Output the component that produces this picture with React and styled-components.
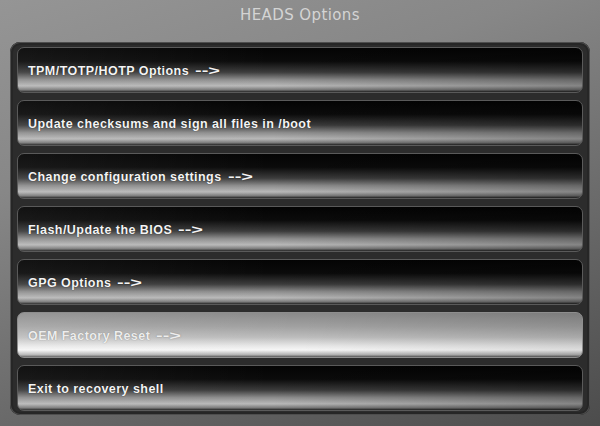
import React from "react";
import styled, { createGlobalStyle } from "styled-components";

const items = [
  { label: "TPM/TOTP/HOTP Options", more: true },
  { label: "Update checksums and sign all files in /boot" },
  { label: "Change configuration settings", more: true },
  { label: "Flash/Update the BIOS", more: true },
  { label: "GPG Options", more: true },
  { label: "OEM Factory Reset", more: true },
  { label: "Exit to recovery shell" },
];

const SELECTED = 5;

const App = () => {
  return (
    <Screen>
      <GlobalStyle />
      <Title>HEADS Options</Title>
      <Panel>
        {items.map((item, i) => (
          <Row key={item.label} selected={i === SELECTED}>
            <Label selected={i === SELECTED}>
              {item.label}
              {item.more && <Arrow>--&gt;</Arrow>}
            </Label>
          </Row>
        ))}
      </Panel>
    </Screen>
  );
};

const GlobalStyle = createGlobalStyle`
  html, body {
    margin: 0;
    padding: 0;
    background: #4a4a4a;
  }
`;

const Screen = styled.div`
  width: 600px;
  height: 426px;
  overflow: hidden;
  display: flex;
  flex-direction: column;
  background: linear-gradient(160deg, #959595 0%, #878787 30%, #6a6a6a 65%, #4c4c4c 100%);
  font-family: "Liberation Sans", sans-serif;
`;

const Title = styled.div`
  height: 30px;
  margin-bottom: 12px;
  display: flex;
  align-items: center;
  justify-content: center;
  color: #d4d4d4;
  font-family: "DejaVu Sans", sans-serif;
  font-size: 15px;
  letter-spacing: 0.4px;
`;

const Panel = styled.div`
  margin: 0 10px;
  padding: 5px 7px 4px;
  display: flex;
  flex-direction: column;
  gap: 7px;
  background: #2c2c2c;
  border-radius: 10px;
  box-shadow: inset 0 0 0 1px #4e4e4e, inset 0 0 0 3px #262626;
`;

const Row = styled.div`
  height: 46px;
  box-sizing: border-box;
  display: flex;
  align-items: center;
  padding-left: 10px;
  border-radius: 7px;
  border: 1px solid ${(p) => (p.selected ? "#8e8e8e" : "#5a5a5a")};
  background: ${(p) =>
    p.selected
      ? `linear-gradient(to right, rgba(255,255,255,0.1) 0%, rgba(0,0,0,0) 50%, rgba(0,0,0,0.1) 100%),
         linear-gradient(to bottom, #8a8a8a 0%, #a0a0a0 30%, #bcbcbc 55%, #e8e8e8 75%, #f6f6f6 84%, #b0b0b0 95%, #555 100%)`
      : `linear-gradient(to right, rgba(255,255,255,0.06) 0%, rgba(0,0,0,0) 45%, rgba(0,0,0,0.28) 100%),
         linear-gradient(to bottom, #040404 0%, #0b0b0b 30%, #3c3c3c 55%, #8e8e8e 72%, #b9b9b9 86%, #7a7a7a 95%, #222 100%)`};
`;

const Label = styled.span`
  color: ${(p) => (p.selected ? "#ededed" : "#f4f4f4")};
  font-size: 12.5px;
  font-weight: bold;
  letter-spacing: 0.45px;
  margin-top: 2px;
  white-space: pre;
  text-shadow: ${(p) => (p.selected ? "0 0 1px rgba(100,100,100,0.8)" : "0 0 1px rgba(0,0,0,0.8)")};
`;

const Arrow = styled.span`
  display: inline-block;
  margin-left: 6px;
  letter-spacing: 0;
  transform: scaleX(1.6);
  transform-origin: left center;
`;

export default App;
